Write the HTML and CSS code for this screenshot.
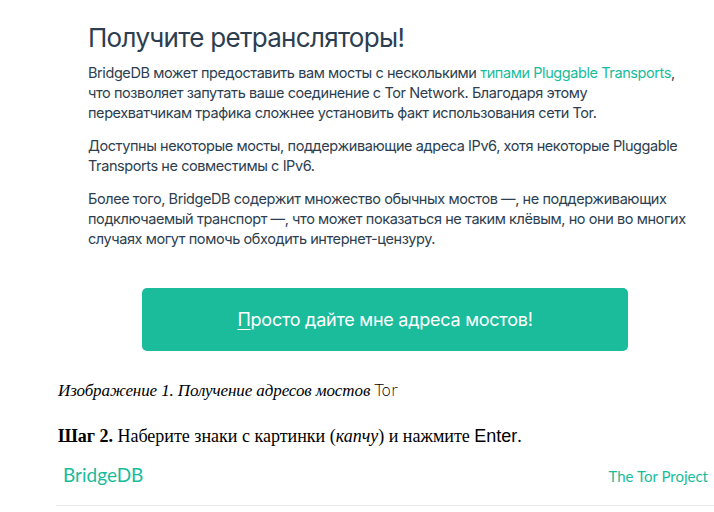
FILE: index.html
```html
<!DOCTYPE html>
<html lang="ru">
<head>
<meta charset="utf-8">
<title>BridgeDB</title>
<link rel="stylesheet" href="styles.css">
</head>
<body>
<div class="page">
  <section class="shot">
    <div class="intro">
      <h1 class="title">Получите ретрансляторы!</h1>
      <p class="para">BridgeDB может предоставить вам мосты с несколькими <a class="link" href="#">типами Pluggable Transports</a>, что позволяет запутать ваше соединение с Tor Network. Благодаря этому перехватчикам трафика сложнее установить факт использования сети Tor.</p>
      <p class="para">Доступны некоторые мосты, поддерживающие адреса IPv6, хотя некоторые Pluggable Transports не совместимы с IPv6.</p>
      <p class="para">Более того, BridgeDB содержит множество обычных мостов —, не поддерживающих подключаемый транспорт —, что может показаться не таким клёвым, но они во многих случаях могут помочь обходить интернет-цензуру.</p>
    </div>
    <div class="action">
      <a class="btn" href="#"><span class="ul">П</span>росто дайте мне адреса мостов!</a>
    </div>
  </section>
  <p class="caption">Изображение 1. Получение адресов мостов <span class="tor">Tor</span></p>
  <p class="step"><b>Шаг 2.</b> Наберите знаки с картинки (<i>капчу</i>) и нажмите <span class="key">Enter</span>.</p>
  <div class="footer">
    <span class="brand">BridgeDB</span>
    <span class="proj">The Tor Project</span>
  </div>
</div>
</body>
</html>
```
FILE: styles.css
```css
html, body {
  margin: 0;
  padding: 0;
  background: #fff;
}
.page {
  width: 714px;
  height: 512px;
  overflow: hidden;
  position: relative;
}
.shot {
  display: flex;
  flex-direction: column;
}
.intro {
  width: 600px;
  padding: 22px 0 0 88px;
  color: #2c3e50;
  font-family: Inter, "Noto Sans", sans-serif;
}
.title {
  margin: 0 0 9px 0;
  font-size: 26px;
  font-weight: 400;
  line-height: 32px;
  letter-spacing: -0.7px;
}
.para {
  margin: 0 0 13px 0;
  font-size: 14.5px;
  line-height: 20px;
  letter-spacing: -0.42px;
}
.link {
  color: #18bc9c;
  text-decoration: none;
}
.action {
  display: flex;
  padding: 26px 0 0 142px;
}
.btn {
  display: flex;
  align-items: center;
  justify-content: center;
  width: 486px;
  height: 63px;
  border-radius: 5px;
  background: #1abc9c;
  color: #fff;
  font-family: Inter, "Noto Sans", sans-serif;
  font-size: 18px;
  letter-spacing: -0.25px;
  text-decoration: none;
}
.ul {
  text-decoration: underline;
  text-underline-offset: 3px;
}
.caption {
  margin: 30px 0 0 58px;
  font-family: "Liberation Serif", serif;
  font-style: italic;
  font-size: 17px;
  letter-spacing: -0.1px;
  color: #000;
}
.tor {
  font-style: normal;
  font-family: "DejaVu Sans", sans-serif;
  font-weight: 300;
  font-size: 16px;
}
.step {
  margin: 25px 0 0 58px;
  font-family: "Liberation Serif", serif;
  font-size: 18px;
  color: #000;
}
.key {
  font-family: "Liberation Sans", sans-serif;
}
.footer {
  margin: 16px 0 0 56px;
  padding: 0 6px 19px 7px;
  display: flex;
  justify-content: space-between;
  align-items: baseline;
  border-bottom: 1px solid #ececec;
  font-family: Lato, sans-serif;
  color: #18bc9c;
}
.brand {
  font-size: 19px;
}
.proj {
  font-size: 15px;
}
```
